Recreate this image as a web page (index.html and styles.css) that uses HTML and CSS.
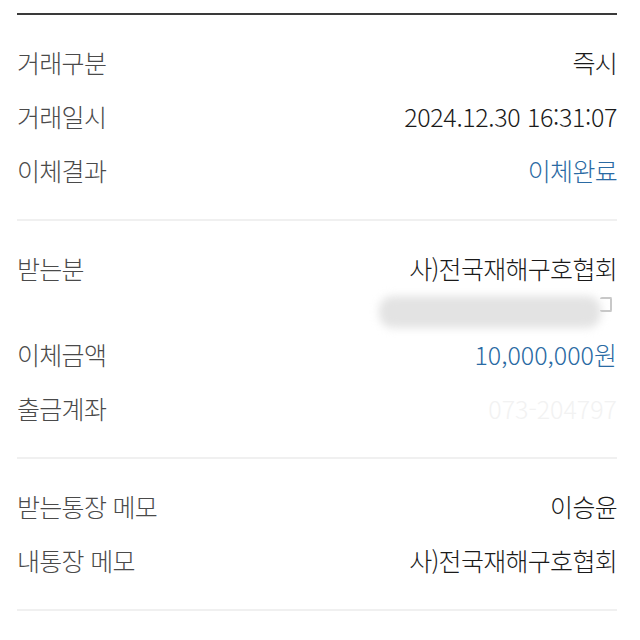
FILE: index.html
```html
<!DOCTYPE html>
<html lang="ko">
<head>
<meta charset="utf-8">
<link rel="stylesheet" href="styles.css">
</head>
<body>
<div class="page">
  <div class="top-line"></div>
  <section class="group">
    <div class="row"><span class="label">거래구분</span><span class="value">즉시</span></div>
    <div class="row"><span class="label">거래일시</span><span class="value date">2024.12.30 16:31:07</span></div>
    <div class="row"><span class="label">이체결과</span><span class="value blue">이체완료</span></div>
  </section>
  <section class="group">
    <div class="row"><span class="label">받는분</span><span class="value">사)전국재해구호협회</span></div>
    <div class="subrow">
      <div class="masked"><div class="blob"></div><span class="copy"></span></div>
    </div>
    <div class="row"><span class="label">이체금액</span><span class="value blue num">10,000,000원</span></div>
    <div class="row"><span class="label">출금계좌</span><span class="value faint num">073-204797</span></div>
  </section>
  <section class="group">
    <div class="row"><span class="label">받는통장 메모</span><span class="value">이승윤</span></div>
    <div class="row"><span class="label">내통장 메모</span><span class="value">사)전국재해구호협회</span></div>
  </section>
</div>
</body>
</html>
```
FILE: styles.css
```css
* { box-sizing: border-box; }
html, body { margin: 0; padding: 0; background: #fff; }
body {
  font-family: "Noto Sans CJK KR", "Noto Sans", sans-serif;
  width: 640px;
  height: 640px;
  overflow: hidden;
}
.page {
  padding: 13px 23px 0 17px;
}
.top-line {
  height: 2px;
  background: #3a3a3a;
}
.group {
  padding: 20px 0 22px 0;
  border-bottom: 2px solid #f0f0f0;
}
.row {
  height: 54px;
  display: flex;
  justify-content: space-between;
  align-items: center;
  font-size: 25px;
  font-weight: 300;
  letter-spacing: -0.7px;
}
.label { color: #4a4a4a; }
.value { color: #1a1a1a; }
.value.num { letter-spacing: 0; }
.value.date { letter-spacing: -0.35px; }
.value.blue { color: #2a6aa3; }
.value.faint { color: #f2f2f2; }
.subrow {
  height: 32px;
  display: flex;
  justify-content: flex-end;
  align-items: center;
}
.masked {
  position: relative;
  width: 240px;
  height: 38px;
}
.blob {
  position: absolute;
  left: 2px;
  top: 4px;
  width: 222px;
  height: 32px;
  background: #e3e3e3;
  border-radius: 14px;
  filter: blur(4px);
}
.copy {
  position: absolute;
  right: 5px;
  top: 5px;
  width: 12px;
  height: 15px;
  border: 2px solid #c8c8c8;
  border-left: none;
  border-radius: 2px;
}
```
